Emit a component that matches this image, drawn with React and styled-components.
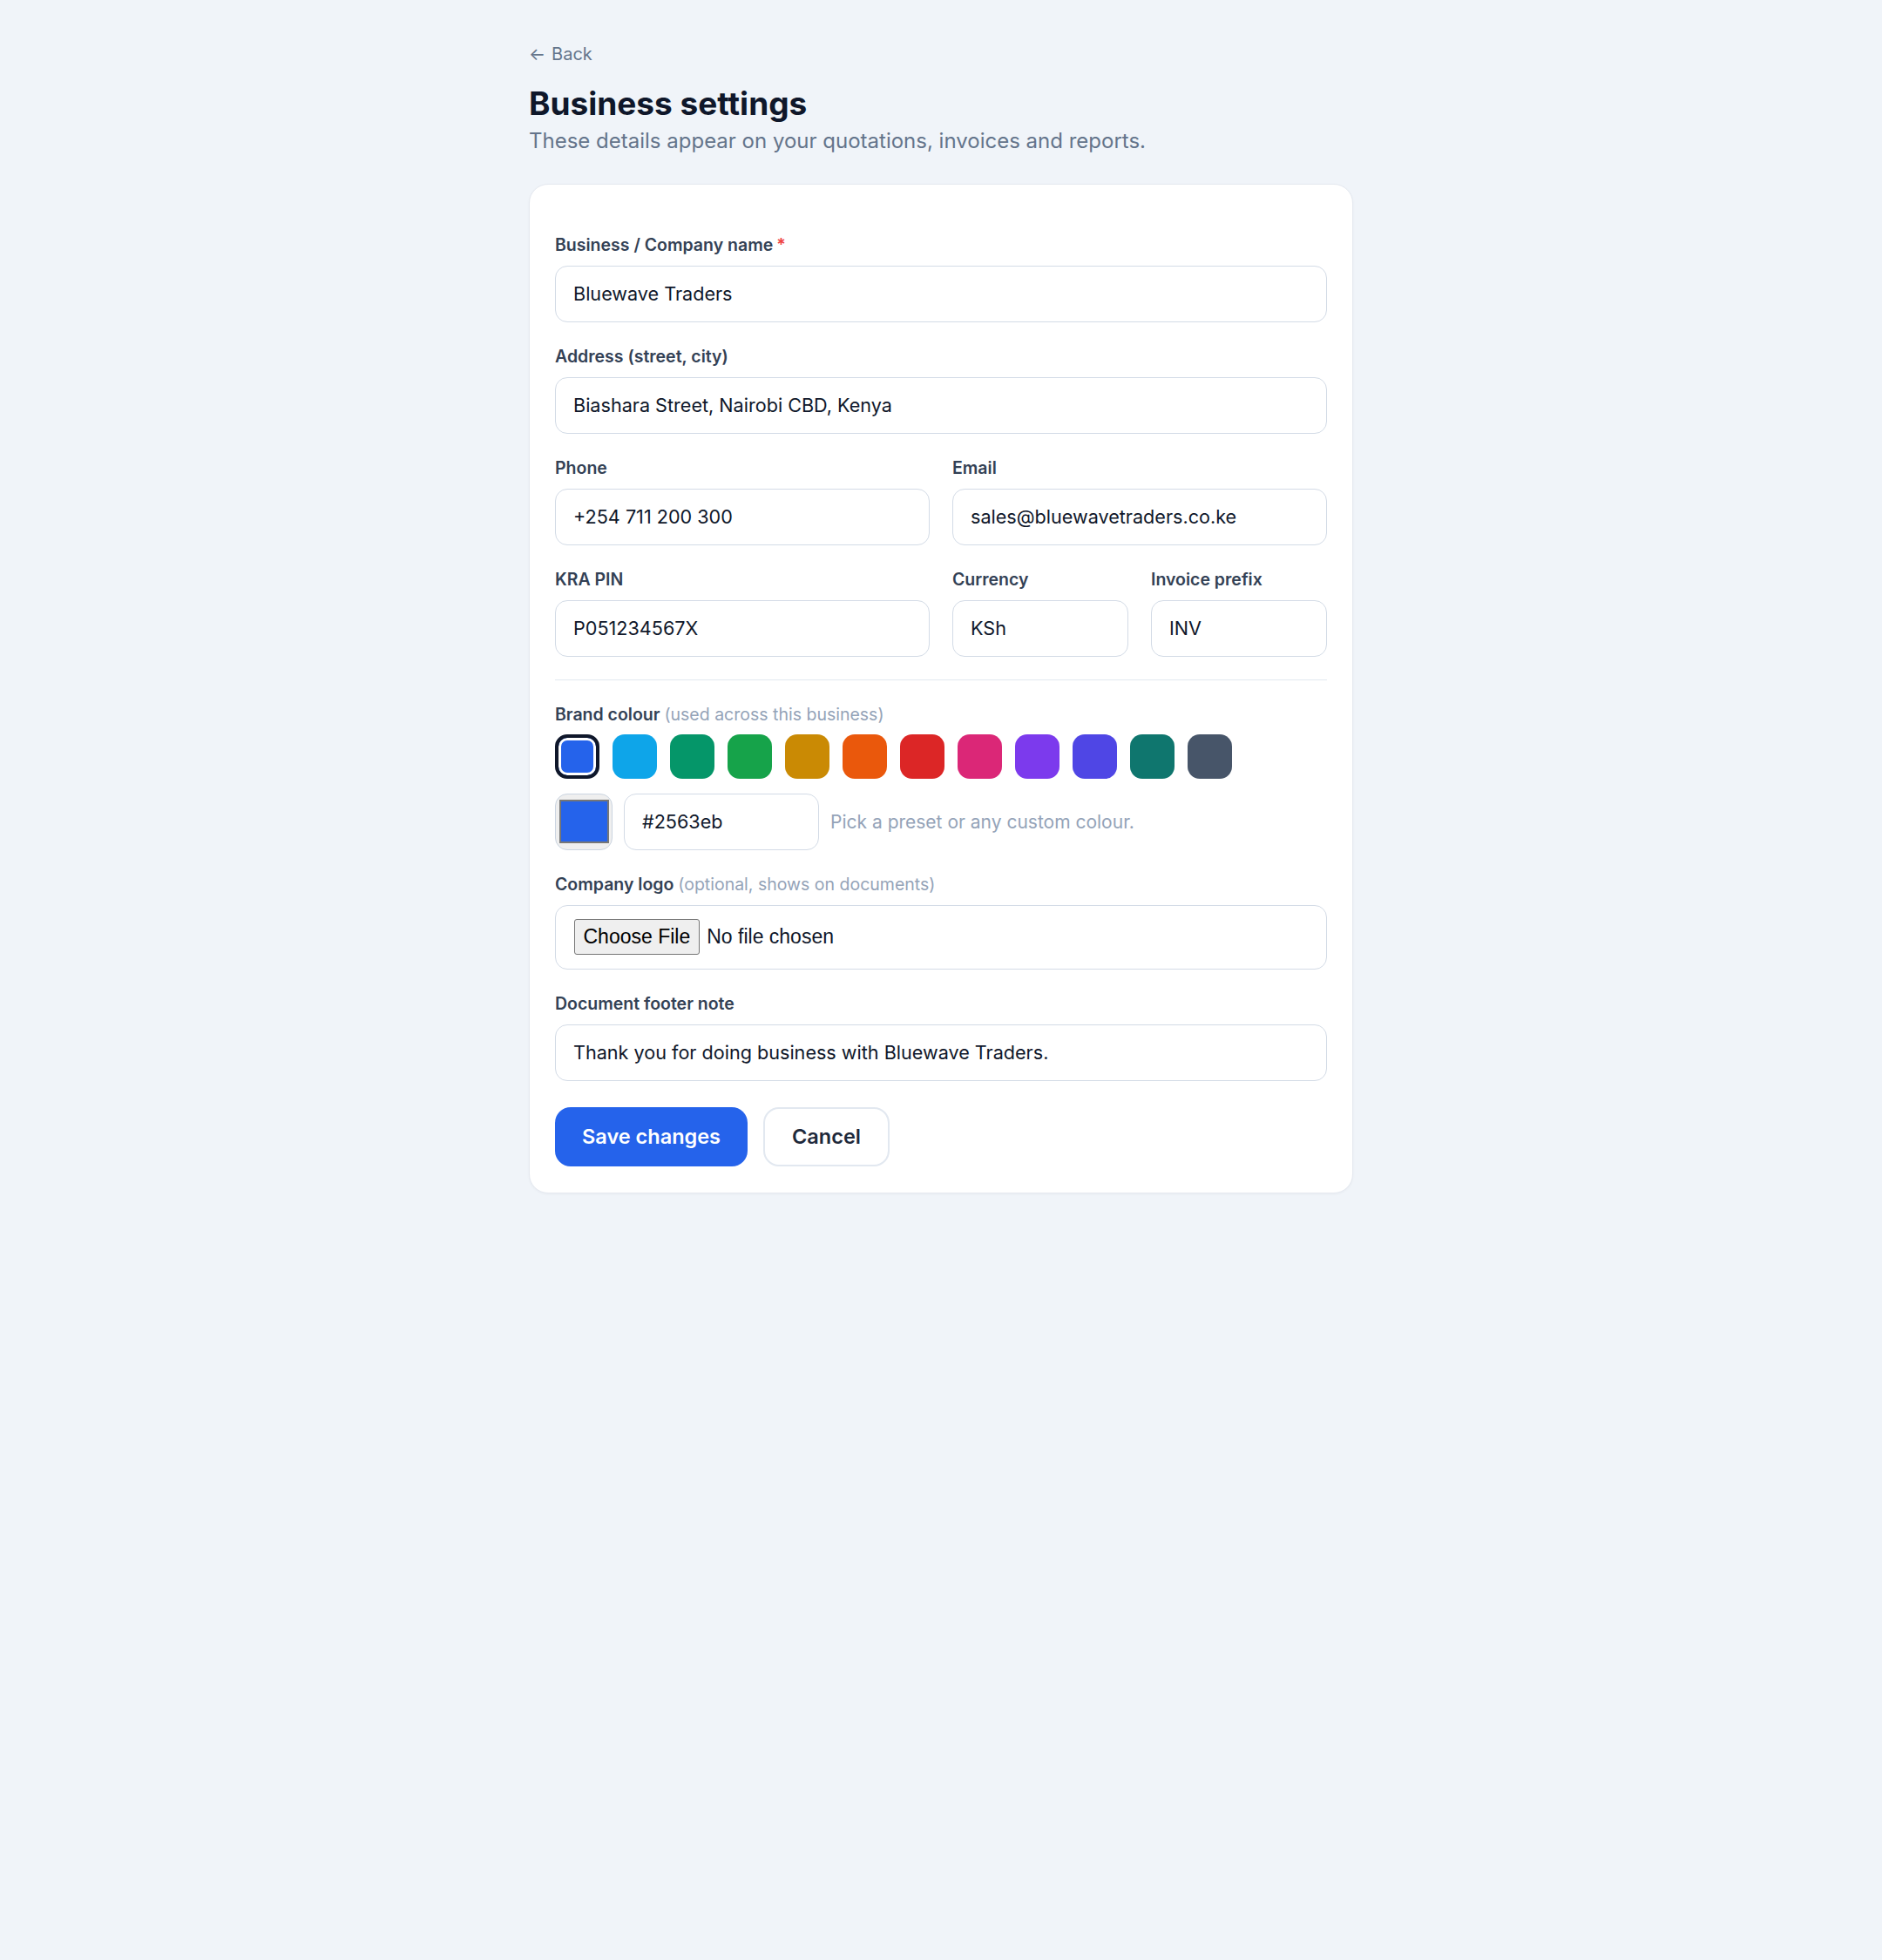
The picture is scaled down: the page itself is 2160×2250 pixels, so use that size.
import React from 'react';
import styled, { createGlobalStyle } from 'styled-components';

const GlobalStyle = createGlobalStyle`
  html, body {
    margin: 0;
    padding: 0;
    background: #f0f4f9;
  }
  body {
    font-family: Inter, "Noto Sans", sans-serif;
    color: #0f172a;
  }
  * {
    box-sizing: border-box;
  }
`;

const Page = styled.div`
  min-height: 2250px;
  padding: 48px 0 80px;
`;

const Container = styled.div`
  width: 946px;
  margin: 0 auto;
`;

const BackLink = styled.a`
  display: inline-flex;
  align-items: center;
  gap: 7px;
  font-size: 20px;
  line-height: 28px;
  color: #64748b;
  text-decoration: none;
  cursor: pointer;
`;

const Title = styled.h1`
  margin: 21px 0 0;
  font-size: 37px;
  line-height: 44px;
  font-weight: 700;
  color: #0f172a;
`;

const Subtitle = styled.p`
  margin: 5px 0 0;
  font-size: 24px;
  line-height: 32px;
  color: #64748b;
`;

const Card = styled.form`
  margin-top: 33px;
  background: #ffffff;
  border: 1.5px solid #e5e9f0;
  border-radius: 22px;
  box-shadow: 0 1px 3px rgba(15, 23, 42, 0.04);
  padding: 55.5px 29px 30.5px;
  display: flex;
  flex-direction: column;
  gap: 26px;
`;

const Grid = styled.div`
  display: grid;
  grid-template-columns: repeat(4, 1fr);
  gap: 26px;
`;

const Field = styled.div`
  display: flex;
  flex-direction: column;
  grid-column: span ${(p) => p.$span || 4};
`;

const Label = styled.label`
  font-size: 19.5px;
  line-height: 26px;
  font-weight: 600;
  color: #334155;
  margin-bottom: ${(p) => p.$gap || 11}px;
`;

const Required = styled.span`
  color: #ef4444;
  margin-left: 4px;
`;

const Muted = styled.span`
  font-weight: 400;
  color: #94a3b8;
`;

const Input = styled.input`
  width: 100%;
  height: 65px;
  padding: 0 20px;
  border: 1.5px solid #d3dbe6;
  border-radius: 14px;
  background: #ffffff;
  font-family: Inter, "Noto Sans", sans-serif;
  font-size: 21.6px;
  color: #0f172a;
  outline: none;
`;

const Divider = styled.hr`
  margin: 0;
  border: 0;
  border-top: 1.5px solid #e2e8f0;
`;

const SwatchRow = styled.div`
  display: flex;
  gap: 15px;
  margin-bottom: 17px;
`;

const Swatch = styled.button`
  width: 51px;
  height: 51px;
  padding: 0;
  border-radius: 14px;
  border: ${(p) => (p.$selected ? '4.5px solid #0f172a' : 'none')};
  box-shadow: ${(p) => (p.$selected ? 'inset 0 0 0 3px #ffffff' : 'none')};
  background: ${(p) => p.$color};
  cursor: pointer;
`;

const PickerRow = styled.div`
  display: flex;
  align-items: center;
  gap: 13px;
`;

const ColorPicker = styled.input`
  width: 66px;
  height: 65px;
  padding: 0 3.5px;
  border: 1.5px solid #cbd5e1;
  border-radius: 14px;
  background: #efefef;
  cursor: pointer;

  &::-webkit-color-swatch-wrapper {
    padding: 6.5px 0;
  }
  &::-webkit-color-swatch {
    border: 2px solid #767676;
    border-radius: 0;
  }
`;

const HexInput = styled(Input)`
  width: 224px;
`;

const Hint = styled.span`
  font-size: 21px;
  color: #94a3b8;
`;

const FileBox = styled.div`
  border: 1.5px solid #d3dbe6;
  border-radius: 14px;
  padding: 15.5px 20.5px;
  background: #ffffff;
`;

const FileInput = styled.input`
  font-family: "Liberation Sans", Arial, sans-serif;
  font-size: 23px;
  color: #0f172a;

  &::file-selector-button {
    font: inherit;
    color: #000000;
    height: 41px;
    padding: 0 10px;
    margin-right: 8px;
    border: 1.5px solid #767676;
    border-radius: 3px;
    background: #efefef;
  }
`;

const Actions = styled.div`
  display: flex;
  gap: 18px;
  margin-top: 4px;
`;

const Button = styled.button`
  height: 68px;
  padding: 0 31px;
  border-radius: 18px;
  font-family: Inter, "Noto Sans", sans-serif;
  font-size: 23.5px;
  font-weight: 600;
  cursor: pointer;
  border: ${(p) => (p.$primary ? 'none' : '2px solid #e2e8f0')};
  background: ${(p) => (p.$primary ? '#2563eb' : '#ffffff')};
  color: ${(p) => (p.$primary ? '#ffffff' : '#1e293b')};
`;

const COLOURS = [
  '#2563eb',
  '#0ea5e9',
  '#059669',
  '#16a34a',
  '#ca8a04',
  '#ea580c',
  '#dc2626',
  '#db2777',
  '#7c3aed',
  '#4f46e5',
  '#0f766e',
  '#475569'
];

const App = () => (
  <Page>
    <GlobalStyle />
    <Container>
      <BackLink>
        <span>←</span>
        <span>Back</span>
      </BackLink>
      <Title>Business settings</Title>
      <Subtitle>These details appear on your quotations, invoices and reports.</Subtitle>

      <Card onSubmit={(e) => e.preventDefault()}>
        <Field>
          <Label>
            Business / Company name<Required>*</Required>
          </Label>
          <Input defaultValue="Bluewave Traders" />
        </Field>

        <Field>
          <Label>Address (street, city)</Label>
          <Input defaultValue="Biashara Street, Nairobi CBD, Kenya" />
        </Field>

        <Grid>
          <Field $span={2}>
            <Label>Phone</Label>
            <Input defaultValue="+254 711 200 300" />
          </Field>
          <Field $span={2}>
            <Label>Email</Label>
            <Input defaultValue="sales@bluewavetraders.co.ke" />
          </Field>
        </Grid>

        <Grid>
          <Field $span={2}>
            <Label>KRA PIN</Label>
            <Input defaultValue="P051234567X" />
          </Field>
          <Field $span={1}>
            <Label>Currency</Label>
            <Input defaultValue="KSh" />
          </Field>
          <Field $span={1}>
            <Label>Invoice prefix</Label>
            <Input defaultValue="INV" />
          </Field>
        </Grid>

        <Divider />

        <Field>
          <Label $gap={10}>
            Brand colour <Muted>(used across this business)</Muted>
          </Label>
          <SwatchRow>
            {COLOURS.map((c, i) => (
              <Swatch key={c} type="button" $color={c} $selected={i === 0} />
            ))}
          </SwatchRow>
          <PickerRow>
            <ColorPicker type="color" defaultValue="#2563eb" />
            <HexInput defaultValue="#2563eb" />
            <Hint>Pick a preset or any custom colour.</Hint>
          </PickerRow>
        </Field>

        <Field>
          <Label>
            Company logo <Muted>(optional, shows on documents)</Muted>
          </Label>
          <FileBox>
            <FileInput type="file" />
          </FileBox>
        </Field>

        <Field>
          <Label>Document footer note</Label>
          <Input defaultValue="Thank you for doing business with Bluewave Traders." />
        </Field>

        <Actions>
          <Button $primary type="submit">Save changes</Button>
          <Button type="button">Cancel</Button>
        </Actions>
      </Card>
    </Container>
  </Page>
);

export default App;
